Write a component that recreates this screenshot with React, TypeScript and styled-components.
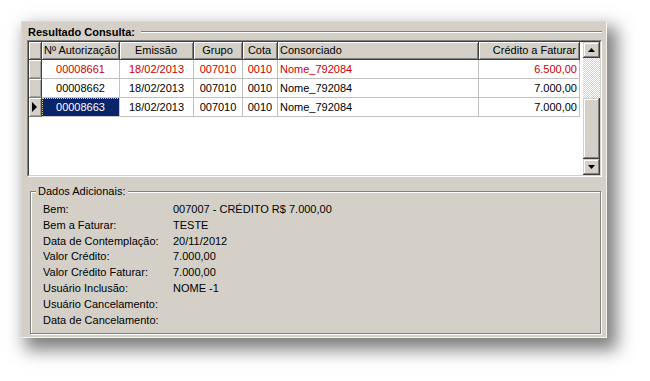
import React from "react";
import styled, { createGlobalStyle } from "styled-components";

const Global = createGlobalStyle`
  html, body { margin: 0; padding: 0; background: #ffffff; }
  body { font-family: "Liberation Sans", Arial, sans-serif; font-size: 11px; color: #000; }
  * { box-sizing: border-box; }
`;

const Page = styled.div`
  width: 650px;
  height: 381px;
  padding: 21px 0 0 21px;
  overflow: hidden;
`;

const Panel = styled.div`
  width: 586px;
  height: 317px;
  background: #d4d0c8;
  border: 1px solid;
  border-color: #dcd9d2 #f4f3f0 #f4f3f0 #dcd9d2;
  box-shadow: 7px 9px 16px 3px rgba(0, 0, 0, 0.5);
  padding: 3px 4px 3px 5px;
  display: flex;
  flex-direction: column;
`;

const TitleRow = styled.div`
  display: flex;
  height: 15px;
  line-height: 15px;
  padding-left: 1px;
`;

const Title = styled.span`
  font-weight: bold;
  white-space: nowrap;
`;

const TitleLine = styled.div`
  flex: 1;
  margin: 6px 0 0 6px;
  height: 2px;
  border-top: 1px solid #808080;
  border-bottom: 1px solid #ffffff;
`;

const GridOuter = styled.div`
  height: 137px;
  border: 1px solid;
  border-color: #808080 #ffffff #ffffff #808080;
`;

const GridInner = styled.div`
  height: 100%;
  border: 1px solid;
  border-color: #404040 #d4d0c8 #d4d0c8 #404040;
  background: #ffffff;
  display: flex;
`;

const TableArea = styled.div`
  flex: 1;
  overflow: hidden;
`;

const COLS = "13px 78px 74px 49px 35px 201px 101px";

const Row = styled.div<{ $h: number }>`
  display: grid;
  grid-template-columns: ${COLS};
  height: ${(p) => p.$h}px;
  line-height: ${(p) => p.$h - 1}px;
`;

const HeadCell = styled.div<{ $align: string }>`
  background: #d4d0c8;
  border-right: 1px solid #404040;
  border-bottom: 1px solid #404040;
  box-shadow: inset 1px 1px #ffffff, inset -1px -1px #808080;
  text-align: ${(p) => p.$align};
  padding: 0 3px 0 2px;
  white-space: nowrap;
  overflow: hidden;
`;

const Indicator = styled.div`
  background: #d4d0c8;
  border-right: 1px solid #404040;
  border-bottom: 1px solid #808080;
  box-shadow: inset 1px 1px #ffffff, inset -1px -1px #a0a0a0;
  display: flex;
  align-items: center;
  padding-left: 3px;
`;

const Cell = styled.div<{ $align: string; $red?: boolean; $sel?: boolean }>`
  border-right: 1px solid #c0c0c0;
  border-bottom: 1px solid #c0c0c0;
  text-align: ${(p) => p.$align};
  padding: 0 2px;
  white-space: nowrap;
  overflow: hidden;
  color: ${(p) => (p.$sel ? "#ffffff" : p.$red ? "#cc0000" : "#000000")};
  background: ${(p) => (p.$sel ? "#0a246a" : "transparent")};
  outline: ${(p) => (p.$sel ? "1px dotted #d8d4a0" : "none")};
  outline-offset: -1px;
`;

const ScrollBar = styled.div`
  width: 17px;
  display: flex;
  flex-direction: column;
`;

const ScrollButton = styled.div`
  height: 16px;
  background: #d4d0c8;
  box-shadow: inset -1px -1px #404040, inset 1px 1px #d4d0c8, inset -2px -2px #808080, inset 2px 2px #ffffff;
  display: flex;
  align-items: center;
  justify-content: center;
`;

const Track = styled.div`
  height: 40px;
  background: repeating-conic-gradient(#ffffff 0 25%, #d4d0c8 0 50%) 0 0 / 2px 2px;
`;

const Thumb = styled.div`
  flex: 1;
  background: #d4d0c8;
  box-shadow: inset -1px -1px #404040, inset 1px 1px #d4d0c8, inset -2px -2px #808080, inset 2px 2px #ffffff;
`;

const Fieldset = styled.fieldset`
  margin: 8px 1px 0 3px;
  padding: 4px 8px 3px 5px;
  flex: 1;
  min-width: 0;
  border: 1px solid #808080;
  box-shadow: inset 1px 1px #ffffff, 1px 1px #ffffff;
`;

const Legend = styled.legend`
  padding: 0 3px 0 2px;
  line-height: 13px;
  background: #d4d0c8;
`;

const InfoGrid = styled.div`
  display: grid;
  grid-template-columns: 130px 1fr;
  grid-auto-rows: 15.8px;
  line-height: 15.8px;
  padding-left: 7px;
  white-space: nowrap;
`;

type Align = "left" | "center" | "right";
const headers: { t: string; a: Align }[] = [
  { t: "Nº Autorização", a: "left" },
  { t: "Emissão", a: "center" },
  { t: "Grupo", a: "center" },
  { t: "Cota", a: "center" },
  { t: "Consorciado", a: "left" },
  { t: "Crédito a Faturar", a: "right" },
];
const aligns: Align[] = ["center", "center", "center", "center", "left", "right"];

const rows = [
  { v: ["00008661", "18/02/2013", "007010", "0010", "Nome_792084", "6.500,00"], red: true, sel: false },
  { v: ["00008662", "18/02/2013", "007010", "0010", "Nome_792084", "7.000,00"], red: false, sel: false },
  { v: ["00008663", "18/02/2013", "007010", "0010", "Nome_792084", "7.000,00"], red: false, sel: true },
];

const info: [string, string][] = [
  ["Bem:", "007007 - CRÉDITO R$ 7.000,00"],
  ["Bem a Faturar:", "TESTE"],
  ["Data de Contemplação:", "20/11/2012"],
  ["Valor Crédito:", "7.000,00"],
  ["Valor Crédito Faturar:", "7.000,00"],
  ["Usuário Inclusão:", "NOME -1"],
  ["Usuário Cancelamento:", ""],
  ["Data de Cancelamento:", ""],
];

const Arrow = ({ up }: { up?: boolean }) => (
  <svg width="7" height="4" viewBox="0 0 7 4">
    <polygon points={up ? "3.5,0 7,4 0,4" : "0,0 7,0 3.5,4"} fill="#000" />
  </svg>
);

export default function App() {
  return (
    <>
      <Global />
      <Page>
        <Panel>
          <TitleRow>
            <Title>Resultado Consulta:</Title>
            <TitleLine />
          </TitleRow>
          <GridOuter>
            <GridInner>
              <TableArea>
                <Row $h={18}>
                  <HeadCell $align="left" />
                  {headers.map((h) => (
                    <HeadCell key={h.t} $align={h.a}>
                      {h.t}
                    </HeadCell>
                  ))}
                </Row>
                {rows.map((r, i) => (
                  <Row key={i} $h={19}>
                    <Indicator>
                      {r.sel && (
                        <svg width="5" height="10" viewBox="0 0 5 10">
                          <polygon points="0,0 5,5 0,10" fill="#000" />
                        </svg>
                      )}
                    </Indicator>
                    {r.v.map((v, j) => (
                      <Cell key={j} $align={aligns[j]} $red={r.red} $sel={r.sel && j === 0}>
                        {v}
                      </Cell>
                    ))}
                  </Row>
                ))}
              </TableArea>
              <ScrollBar>
                <ScrollButton>
                  <Arrow up />
                </ScrollButton>
                <Track />
                <Thumb />
                <ScrollButton>
                  <Arrow />
                </ScrollButton>
              </ScrollBar>
            </GridInner>
          </GridOuter>
          <Fieldset>
            <Legend>Dados Adicionais:</Legend>
            <InfoGrid>
              {info.map(([k, v]) => (
                <React.Fragment key={k}>
                  <span>{k}</span>
                  <span>{v}</span>
                </React.Fragment>
              ))}
            </InfoGrid>
          </Fieldset>
        </Panel>
      </Page>
    </>
  );
}
